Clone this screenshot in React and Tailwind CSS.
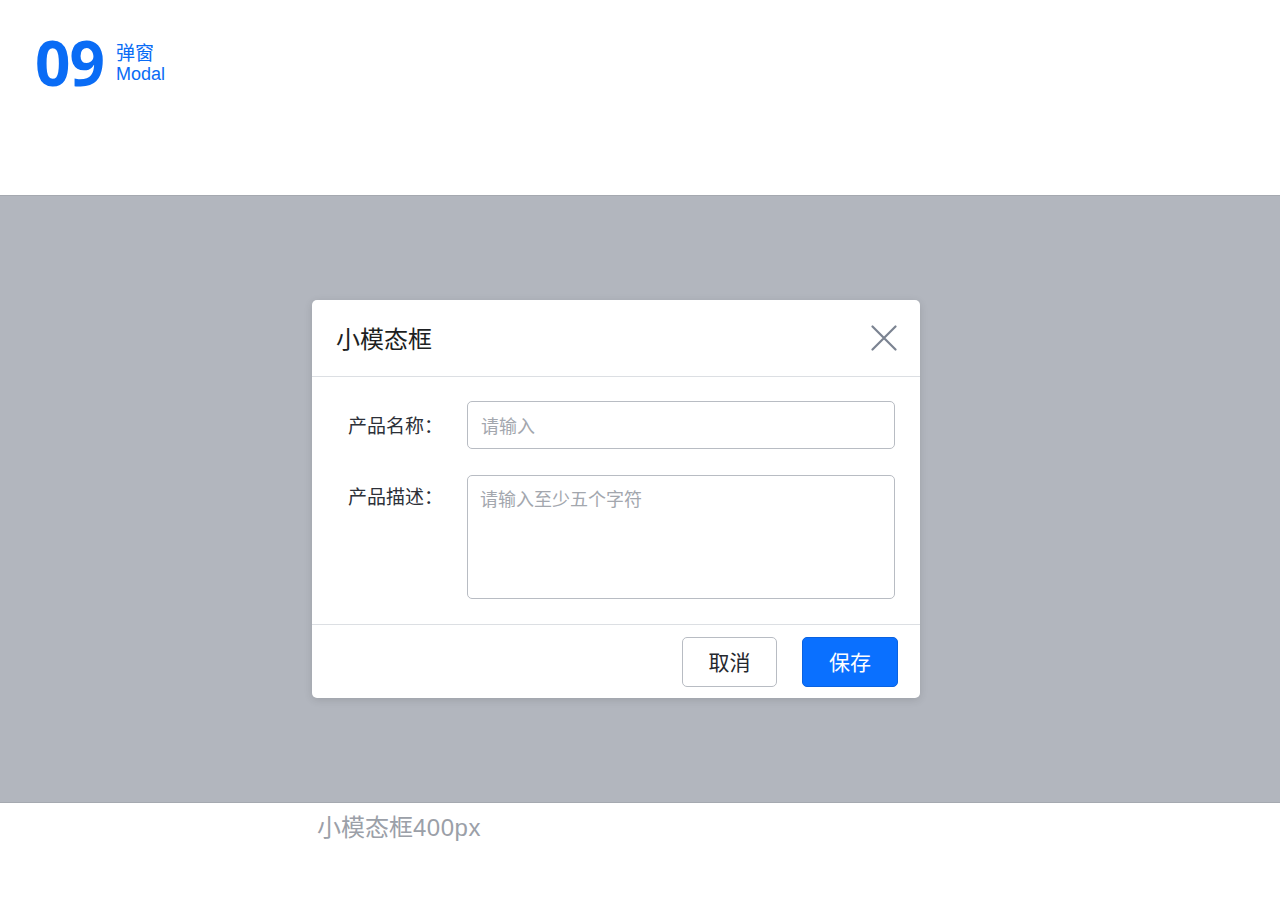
import React from "react";

const CloseIcon = () => (
  <svg width="26" height="26" viewBox="0 0 26 26" fill="none">
    <path d="M1.5 1.5L24.5 24.5M24.5 1.5L1.5 24.5" stroke="#7b8391" strokeWidth="2.2" strokeLinecap="round" />
  </svg>
);

export default function App() {
  return (
    <div className="w-[1280px] h-[905px] bg-white flex flex-col font-['Noto_Sans_CJK_SC',sans-serif]">
      <div className="h-[195px] flex items-start pl-[35px] pt-[31px]">
        <div className="text-[62px] leading-[62px] font-bold text-[#0a6cf5] tracking-[-1px] font-['Noto_Sans',sans-serif]">09</div>
        <div className="ml-[12px] mt-[11px] flex flex-col text-[#0a6cf5]">
          <span className="text-[19px] leading-[20px]">弹窗</span>
          <span className="text-[18px] leading-[20px] mt-[2px] font-['Liberation_Sans',sans-serif]">Modal</span>
        </div>
      </div>

      <div className="h-[608px] bg-[#b2b6be] border-y border-[#a5a9b0] flex justify-start pl-[312px] pt-[104px]">
        <div className="w-[608px] h-[398px] bg-white rounded-[5px] shadow-[0_2px_8px_rgba(0,0,0,0.12)] flex flex-col">
          <div className="h-[77px] border-b border-[#dcdfe3] flex items-center justify-between pl-[24px] pr-[23px]">
            <span className="text-[24px] text-[#1d1f22]">小模态框</span>
            <CloseIcon />
          </div>
          <div className="flex-1 flex flex-col pt-[24px] pl-[36px] pr-[25px] gap-[26px]">
            <div className="flex items-center">
              <span className="w-[119px] text-[19px] text-[#2c3038]">产品名称：</span>
              <div className="flex-1 h-[48px] border border-[#b8bcc3] rounded-[5px] flex items-center px-[13px] text-[18px] text-[#a3a7ae]">
                请输入
              </div>
            </div>
            <div className="flex items-start">
              <span className="w-[119px] text-[19px] text-[#2c3038] mt-[7px]">产品描述：</span>
              <div className="flex-1 h-[124px] border border-[#b8bcc3] rounded-[5px] px-[12px] pt-[9px] text-[18px] text-[#a3a7ae]">
                请输入至少五个字符
              </div>
            </div>
          </div>
          <div className="h-[74px] border-t border-[#dcdfe3] flex items-center justify-end pr-[22px] gap-[25px]">
            <button className="w-[95px] h-[50px] border border-[#b8bcc3] rounded-[5px] text-[21px] text-[#25282e] bg-white">取消</button>
            <button className="w-[96px] h-[50px] rounded-[5px] text-[21px] text-white bg-[#0a70ff] border border-[#0a62e0]">保存</button>
          </div>
        </div>
      </div>

      <div className="pl-[317px] pt-[5px] text-[24px] text-[#9ba0a8]">
        小模态框<span className="font-['Liberation_Sans',sans-serif] tracking-[0.5px]">400px</span>
      </div>
    </div>
  );
}
